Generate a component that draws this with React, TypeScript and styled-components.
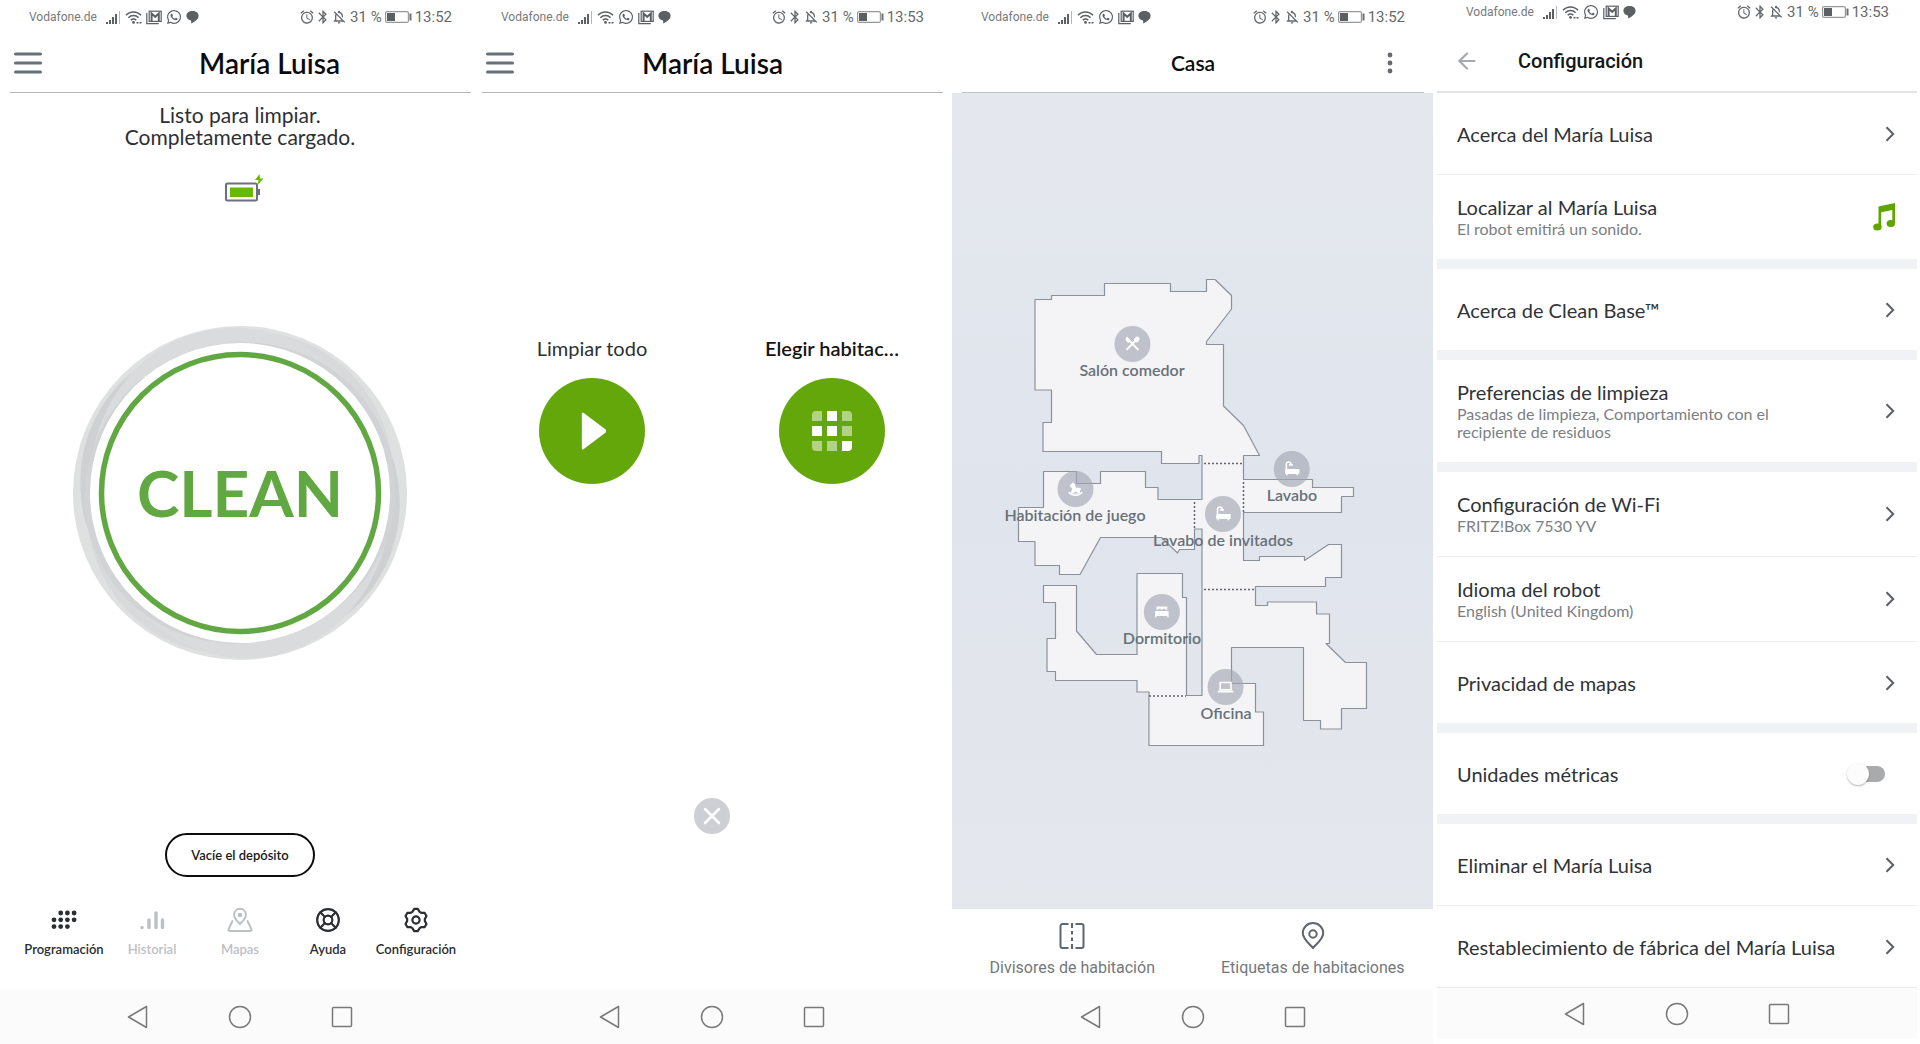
import React from 'react';
import styled, { createGlobalStyle } from 'styled-components';
import { ArrowLeft, LifeBuoy } from 'lucide-react';
import { MdAlarm, MdBluetooth, MdOutlineNotificationsOff } from 'react-icons/md';
import { FaWhatsapp } from 'react-icons/fa';

const rounded = 'Lato, "Open Sans", sans-serif';
const system = 'Roboto, "Liberation Sans", sans-serif';

const GlobalStyle = createGlobalStyle`
  *, *::before, *::after { box-sizing: border-box; }
  body { margin: 0; background: #fff; font-family: ${rounded}; color: #2d3035; }
  button { margin: 0; padding: 0; border: 0; background: none; font: inherit; color: inherit; cursor: pointer; }
  h1, p, ul { margin: 0; padding: 0; }
  svg { display: block; flex: none; }
`;

const Gallery = styled.main`
  display: grid;
  grid-template-columns: 472fr 480fr 481fr 487fr;
  min-height: 100vh;
  overflow: hidden;
`;

const Screen = styled.section<{ $bleed?: boolean; $inset?: boolean }>`
  display: flex;
  flex-direction: column;
  min-width: 0;
  background: #fff;
  margin: ${(p) => (p.$inset ? '0 3px 5px 4px' : p.$bleed ? '0 -8px 0 0' : '0')};
`;

/* Status bar */

const StatusRow = styled.div<{ $compact?: boolean }>`
  display: flex;
  align-items: center;
  justify-content: space-between;
  height: ${(p) => (p.$compact ? 24 : 34)}px;
  padding: 0 28px 0 29px;
  font-family: ${system};
  color: #66696c;
`;

const StatusGroup = styled.div<{ $gap: number }>`
  display: flex;
  align-items: center;
  gap: ${(p) => p.$gap}px;
`;

const Carrier = styled.span`
  font-size: 12px;
  margin-right: 5px;
  color: #77797c;
`;

const StatusText = styled.span`
  font-size: 15px;
  white-space: nowrap;
`;

const SignalIcon = () => (
  <svg width="15" height="15" viewBox="0 0 15 15" fill="#5d6063">
    <rect x="0" y="12" width="2" height="2" />
    <rect x="3" y="10" width="2" height="4" />
    <rect x="6" y="7" width="2" height="7" />
    <rect x="9" y="4" width="2" height="10" />
    <rect x="13" y="1" width="1" height="13" fill="#b5b7b9" />
  </svg>
);

const WifiIcon = () => (
  <svg width="17" height="15" viewBox="0 0 17 15" fill="none" stroke="#5d6063" strokeWidth="1.5">
    <path d="M1 5.2C5 .8 12 .8 16 5.2M3.4 7.8c2.8-3 7.4-3 10.2 0M5.7 10.2c1.6-1.6 4-1.6 5.6 0" />
    <circle cx="8.5" cy="12.4" r="1.4" fill="#5d6063" stroke="none" />
    <path d="M11.5 12.8h2M14.5 12.8h2" />
  </svg>
);

const MailIcon = () => (
  <svg width="16" height="15" viewBox="0 0 16 15" fill="none" stroke="#5d6063">
    <path d="M.8 3v10.7h12" strokeWidth="1.2" />
    <rect x="3.2" y="1.2" width="12" height="10.2" strokeWidth="1.2" />
    <path d="M5.6 11V3.6l3.6 3.2 3.6-3.2V11" strokeWidth="2" />
  </svg>
);

const BubbleIcon = () => (
  <svg width="13" height="14" viewBox="0 0 13 14" fill="#5d6063">
    <path d="M6.5 1C3 1 .4 3 .4 5.8c0 2.6 2.1 4.3 4.6 4.7l.3 3.1c2.500-1.400 7.300-3.900 7.300-7.800C12.600 3 10 1 6.500 1z" />
  </svg>
);

const BatteryIcon = () => (
  <svg width="27" height="14" viewBox="0 0 27 14" fill="none" stroke="#96989a">
    <rect x=".6" y="1.6" width="22.8" height="10.8" rx="1.5" strokeWidth="1.2" />
    <rect x="2" y="3" width="8" height="8" fill="#5d6063" stroke="none" />
    <path d="M25.5 3.5v7" strokeWidth="2" stroke="#6c6f72" />
  </svg>
);

function StatusBar({ time, mailFirst, compact }: { time: string; mailFirst?: boolean; compact?: boolean }) {
  return (
    <StatusRow $compact={compact}>
      <StatusGroup $gap={4}>
        <Carrier>Vodafone.de</Carrier>
        <SignalIcon />
        <WifiIcon />
        {mailFirst && <MailIcon />}
        <FaWhatsapp size={16} color="#5d6063" />
        {!mailFirst && <MailIcon />}
        <BubbleIcon />
      </StatusGroup>
      <StatusGroup $gap={3}>
        <StatusGroup $gap={0}>
          <MdAlarm size={16} />
          <MdBluetooth size={16} />
          <MdOutlineNotificationsOff size={16} />
        </StatusGroup>
        <StatusText>31 %</StatusText>
        <BatteryIcon />
        <StatusText>{time}</StatusText>
      </StatusGroup>
    </StatusRow>
  );
}

/* Header */

const Header = styled.header<{ $tint?: boolean }>`
  display: grid;
  grid-template-columns: 48px 1fr 48px;
  align-items: center;
  height: 59px;
  margin: 0 9px 0 10px;
  border-bottom: 1px solid ${(p) => (p.$tint ? '#bcc2ce' : '#b4b6b9')};
`;

const Title = styled.h1<{ $small?: boolean; $shifted?: boolean }>`
  grid-column: 2;
  font-size: ${(p) => (p.$small ? 21 : 28)}px;
  font-weight: 600;
  line-height: 32px;
  text-align: center;
  color: #0b0b0c;
  padding: ${(p) => (p.$shifted ? '0 0 0 58px' : '0')};
`;

const IconButton = styled.button`
  display: flex;
  align-items: center;
  justify-content: center;
  height: 32px;
`;

const MenuButton = styled(IconButton)`
  width: 36px;
`;

const MoreButton = styled(IconButton)`
  width: 28px;
`;

const HamburgerIcon = () => (
  <svg width="28" height="22" viewBox="0 0 28 22" stroke="#67717c" strokeWidth="3" strokeLinecap="round">
    <path d="M1.5 2h25M1.5 11h25M1.5 20h25" />
  </svg>
);

const KebabIcon = () => (
  <svg width="6" height="22" viewBox="0 0 6 22" fill="#66696c">
    <circle cx="3" cy="3" r="2.4" />
    <circle cx="3" cy="11" r="2.4" />
    <circle cx="3" cy="19" r="2.4" />
  </svg>
);

/* Android navigation */

const NavRow = styled.nav<{ $flat?: boolean }>`
  display: flex;
  align-items: center;
  justify-content: center;
  gap: 80px;
  height: ${(p) => (p.$flat ? 51 : 54)}px;
  background: #fbfbfb;
`;

const NavButton = styled(IconButton)`
  width: 22px;
`;

function SystemNav({ flat }: { flat?: boolean }) {
  const line = { fill: 'none', stroke: '#77797b', strokeWidth: 1.5, strokeLinejoin: 'round' as const };
  return (
    <NavRow $flat={flat} aria-label="Sistema">
      <NavButton aria-label="Atrás">
        <svg width="22" height="24" viewBox="0 0 22 24" {...line}><path d="M19.5 1.5v21L1.5 12z" /></svg>
      </NavButton>
      <NavButton aria-label="Inicio">
        <svg width="24" height="24" viewBox="0 0 24 24" {...line}><circle cx="12" cy="12" r="10.5" /></svg>
      </NavButton>
      <NavButton aria-label="Recientes">
        <svg width="22" height="24" viewBox="0 0 22 24" {...line}><rect x="1.5" y="2.5" width="19" height="19" rx="1" /></svg>
      </NavButton>
    </NavRow>
  );
}

/* Home screen */

const HomeBody = styled.div`
  flex: 1;
  display: flex;
  flex-direction: column;
  align-items: center;
  justify-content: space-between;
  padding: 11px 20px 33px;
`;

const HomeTop = styled.div`
  display: flex;
  flex-direction: column;
  align-items: center;
  gap: 26px;
`;

const RobotStatus = styled.p`
  font-size: 21px;
  line-height: 22px;
  text-align: center;
`;

const CleanButton = styled.button`
  display: grid;
  place-items: center;
  margin-bottom: 50px;
  border-radius: 50%;

  & > * { grid-area: 1 / 1; }
`;

const CleanLabel = styled.span`
  font-size: 64px;
  font-weight: 700;
  line-height: 64px;
  color: #61a843;
`;

const HomeBottom = styled.div`
  display: flex;
  flex-direction: column;
  align-items: center;
  align-self: stretch;
  gap: 30px;
`;

const PillButton = styled.button`
  height: 44px;
  width: 150px;
  border: 2px solid #0c0c0c;
  border-radius: 22px;
  font-size: 13px;
  font-weight: 600;
  color: #17181a;
`;

const Tabs = styled.nav`
  display: grid;
  grid-template-columns: repeat(5, 1fr);
  align-self: stretch;
`;

const Tab = styled.button`
  display: flex;
  flex-direction: column;
  align-items: center;
  gap: 8px;
  font-size: 13px;
  font-weight: 600;
  line-height: 16px;
  color: #2a2d31;

  &:disabled { color: #bcc0c4; }
`;

const ChargeIcon = () => (
  <svg width="48" height="28" viewBox="-8 0 48 28">
    <rect x="2" y="9.5" width="31" height="17" rx="1.5" fill="#fff" stroke="#69707f" strokeWidth="2" />
    <rect x="6" y="13.5" width="23" height="9.5" fill="#69b800" />
    <rect x="34" y="15" width="2" height="6" fill="#69707f" />
    <path d="M35.500 0 31 6h3.500l-1 5L39.500 4.500H36z" fill="#69b800" />
  </svg>
);

const RingArt = () => (
  <svg width="334" height="334" viewBox="-167 -167 334 334">
    <circle r="167" fill="#dfe1e1" />
    <ellipse rx="164" ry="151" transform="rotate(-62)" fill="#d8d9da" />
    <ellipse rx="163" ry="151" transform="rotate(32)" fill="#cfd0d2" />
    <ellipse rx="166" ry="150" transform="rotate(78)" fill="#dadbdc" />
    <ellipse rx="156" ry="150" transform="rotate(-20)" fill="#d2d3d5" />
    <circle r="150" fill="#fff" />
    <circle r="138.500" fill="none" stroke="#61a843" strokeWidth="5.500" />
  </svg>
);

const scheduleDots = [[1, 0], [2, 0], [3, 0], [0, 1], [1, 1], [2, 1], [3, 1], [0, 2], [1, 2], [2, 2]];

const ScheduleIcon = () => (
  <svg width="26" height="26" viewBox="0 0 26 26" fill="currentColor">
    {scheduleDots.map(([x, y]) => (
      <circle key={`${x}-${y}`} cx={3 + x * 6.7} cy={6 + y * 6.8} r="2.4" />
    ))}
  </svg>
);

const HistoryIcon = () => (
  <svg width="26" height="26" viewBox="0 0 26 26" stroke="currentColor" strokeWidth="3.4" strokeLinecap="round">
    <path d="M3 20.500v.1M10 13v7.500M17 6v14.500M23.500 13v7.500" />
  </svg>
);

const MapsIcon = () => (
  <svg width="26" height="26" viewBox="0 0 26 26" fill="none" stroke="currentColor" strokeWidth="1.9" strokeLinejoin="round" strokeLinecap="round">
    <path d="M13 17c-3-3-6-5.500-6-9.200a6 6 0 0 1 12 0C19 11.500 16 14 13 17z" />
    <circle cx="13" cy="8" r="1.3" fill="currentColor" />
    <path d="M5.500 14 1.500 22.500c-.3.800.2 1.500 1 1.500h21c.8 0 1.300-.7 1-1.500L20.500 14" />
  </svg>
);

const gearPoints = Array.from({ length: 6 }, (_, k) =>
  [[-24, 8.9], [-9, 11.2], [9, 11.2], [24, 8.9]].map(([offset, radius]) => {
    const angle = ((k * 60 - 90 + offset) * Math.PI) / 180;
    return `${(13 + radius * Math.cos(angle)).toFixed(2)},${(13 + radius * Math.sin(angle)).toFixed(2)}`;
  }).join(' ')
).join(' ');

const GearIcon = () => (
  <svg width="26" height="26" viewBox="0 0 26 26" fill="none" stroke="currentColor" strokeWidth="2.2" strokeLinejoin="round">
    <polygon points={gearPoints} />
    <circle cx="13" cy="13" r="3.6" />
  </svg>
);

/* Room chooser */

const ChooserBody = styled.div`
  flex: 1;
  display: flex;
  flex-direction: column;
  align-items: center;
  justify-content: space-between;
  padding: 243px 0 156px;
`;

const Choices = styled.div`
  display: grid;
  grid-template-columns: 1fr 1fr;
  align-self: stretch;
`;

const Choice = styled.button<{ $strong?: boolean }>`
  display: flex;
  flex-direction: column;
  align-items: center;
  gap: 18px;
  font-size: 20px;
  font-weight: ${(p) => (p.$strong ? 600 : 400)};
  line-height: 24px;
  color: ${(p) => (p.$strong ? '#141517' : '#2d3035')};
`;

const Disc = styled.span`
  display: flex;
  align-items: center;
  justify-content: center;
  width: 106px;
  height: 106px;
  border-radius: 50%;
  background: #64a70b;
`;

const CloseButton = styled(IconButton)`
  width: 36px;
  height: 36px;
  border-radius: 50%;
  background: #cdcfd4;
`;

const PlayIcon = () => (
  <svg width="28" height="38" viewBox="0 0 28 38" fill="#fff" stroke="#fff" strokeWidth="2" strokeLinejoin="round">
    <path d="M6 1.500v35L30 19z" transform="translate(-1 0) scale(.97 1)" />
  </svg>
);

const roomCells = [0, 1, 0, 1, 1, 0, 0, 0, 1];

const CellsIcon = () => (
  <svg width="40" height="40" viewBox="0 0 40 40" fill="#fff">
    <clipPath id="cells"><rect width="40" height="40" rx="4" /></clipPath>
    <g clipPath="url(#cells)">
      {roomCells.map((on, i) => (
        <rect key={i} x={(i % 3) * 15} y={Math.floor(i / 3) * 15} width="10" height="10" opacity={on ? 1 : 0.5} />
      ))}
    </g>
  </svg>
);

/* Map screen */

const MapArea = styled.div`
  flex: 1;
  display: flex;
  align-items: center;
  justify-content: center;
  background: linear-gradient(180deg, #e4e8ee 0%, #e0e4ec 50%, #e4e7ec 100%);
`;

const Plan = styled.div`
  position: relative;
  width: 100%;
  aspect-ratio: 481 / 815;

  & > svg { width: 100%; height: 100%; }
`;

const Pin = styled.div<{ $x: number; $y: number }>`
  position: absolute;
  left: ${(p) => (p.$x / 481) * 100}%;
  top: ${(p) => (p.$y / 815) * 100}%;
  transform: translate(-50%, -18px);
  display: flex;
  flex-direction: column;
  align-items: center;
  font-size: 16px;
  font-weight: 600;
  line-height: 15px;
  white-space: nowrap;
  color: #687079;
`;

const PinDisc = styled.span`
  display: flex;
  align-items: center;
  justify-content: center;
  width: 36px;
  height: 36px;
  border-radius: 50%;
  background: rgba(163, 168, 180, 0.65);
`;

const outline =
  'M83 205.500H99.500V201.500H152.500V189.500H218.500V197.500H254.500V185.500H263L279.500 201.500V215L254.500 247.500V250.500H271.500V312L291.500 331.500L307.500 361.500H291.500V385.500H360.500V393.500H401.500V402.500H389.500V418.500H291.500V466.500H307.500V462.500H352.500V466.500L376.500 450.500H389.500V483.500H373.500V492.500H303.500V511.500H315.500V508H364.500V520H377.500V549.500H374L393.500 568.500H414.500V614.500H389.500V635H368.500V626.500H351.500V553.500H279.500V589.500H303.500V618H311.500V651.500H197V598H185V586.500H103.500V577.500H95V544.500H103.500V508.500H91.500V491.500H124.500V537L144.500 560.500H185V479.500H230.500V503.500H234.500V601.500H250V435H242.500V455.500H227.500L225.500 459L209.500 443.500H148.500L128 480.500H107.500V471.500H83V447.500H66.500V413.500H91.500V377.500H124.500V389.500H148.500V377.500H193.500V393.500H206V405.500H250V361.500H247V369.500H209.500V357.500H91V328.500H99.500V296H83Z';

const dividers = 'M252 369.500H291M291.500 388V418M242.500 408V434M252 495.500H303M197 602H234';

const glyphs: Record<string, React.ReactNode> = {
  dining: (
    <g>
      <path d="M4 3.500 16 16M16 3.500 4 16" stroke="#fff" strokeWidth="2.200" strokeLinecap="round" />
      <ellipse cx="14.8" cy="5" rx="2.6" ry="3.4" transform="rotate(45 14.8 5)" />
      <path d="M2.500 3.500 4 2l4 4-2 2.500c-2 0-3.500-2-3.500-5z" />
    </g>
  ),
  horse: (
    <g>
      <path d="M3.500 6.500 7 2.500 8.500 4c1.200 1 1.200 3 2 4.500h3.500c1.500 0 2.200 1 2.500 2.500l-1.500-.5v4.500H5c0-2.500 1.200-4 1.500-6.500L5 8.500z" />
      <path d="M3 14c3 4 11 4 14 0" stroke="#fff" strokeWidth="1.800" fill="none" strokeLinecap="round" />
      <path d="M8 14.500c1-2 3.500-2 4.500 0z" fill="#bfc3cb" />
    </g>
  ),
  bath: (
    <g>
      <path d="M4 10V4.500C4 1.500 9 1.500 9 4.500" stroke="#fff" strokeWidth="1.800" fill="none" />
      <path d="M6.800 4.500h4.400v1.800H6.800zM2.500 10h16v5.500h-1.500V17h-1.800v-1.500H5.500V17H3.700v-1.500H2.500z" />
    </g>
  ),
  bed: (
    <g>
      <path d="M4 4h12v3.500h-1.500l-1-1h-2l-1 1h-1l-1-1h-2l-1 1H4z" />
      <path d="M2.500 9h15v7h-1.500v-1.500H4V16H2.500z" />
    </g>
  ),
  laptop: (
    <g>
      <path d="M4 5h12v8H4z" stroke="#fff" strokeWidth="1.800" fill="none" />
      <path d="M2 14h16l.8 2H1.200z" />
    </g>
  ),
};

const rooms = [
  { name: 'Salón comedor', glyph: 'dining', x: 180, y: 250 },
  { name: 'Habitación de juego', glyph: 'horse', x: 123, y: 395 },
  { name: 'Lavabo', glyph: 'bath', x: 340, y: 375 },
  { name: 'Lavabo de invitados', glyph: 'bath', x: 271, y: 420 },
  { name: 'Dormitorio', glyph: 'bed', x: 210, y: 518 },
  { name: 'Oficina', glyph: 'laptop', x: 274, y: 593 },
];

const MapActions = styled.div`
  display: grid;
  grid-template-columns: 1fr 1fr;
  height: 81px;
`;

const MapAction = styled.button`
  display: flex;
  flex-direction: column;
  align-items: center;
  justify-content: center;
  gap: 8px;
  font-family: ${system};
  font-size: 16px;
  line-height: 20px;
  color: #74787d;
`;

const DividerIcon = () => (
  <svg width="26" height="28" viewBox="0 0 26 28" fill="none" stroke="#5f666e" strokeWidth="2">
    <path d="M9.500 2H3.500a2 2 0 0 0-2 2v20a2 2 0 0 0 2 2h6M16.500 2h6a2 2 0 0 1 2 2v20a2 2 0 0 1-2 2h-6" />
    <path d="M13 1v5M13 9v3.500M13 15.500v3.500M13 22v5" />
  </svg>
);

const PinIcon = () => (
  <svg width="24" height="28" viewBox="0 0 24 28" fill="none" stroke="#5f666e" strokeWidth="2">
    <path d="M12 26C7 20.500 1.800 16.500 1.800 11.200a10.200 10.200 0 0 1 20.400 0C22.200 16.500 17 20.500 12 26z" />
    <circle cx="12" cy="12" r="3.700" />
  </svg>
);

/* Settings screen */

const SettingsHeader = styled.header`
  display: flex;
  align-items: center;
  gap: 38px;
  height: 69px;
  padding: 6px 23px 0 17px;
  border-bottom: 2px solid #e1e3e5;
`;

const SettingsTitle = styled.h1`
  font-family: ${system};
  font-size: 20px;
  font-weight: 500;
  line-height: 24px;
  color: #151618;
`;

const Section = styled.ul`
  list-style: none;

  & + & { border-top: 10px solid #f1f2f5; }
`;

const Item = styled.li`
  & + & { border-top: 1px solid #ebedef; }
`;

const Row = styled.button<{ $single?: boolean }>`
  display: flex;
  align-items: center;
  justify-content: space-between;
  width: 100%;
  padding: ${(p) => (p.$single ? '29px 22px 28px 20px' : '20px 22px 21px 20px')};
  text-align: left;
`;

const SwitchRow = styled.label`
  display: flex;
  align-items: center;
  justify-content: space-between;
  padding: 29px 32px 28px 20px;
`;

const RowText = styled.span`
  display: flex;
  flex-direction: column;
  gap: 1px;
  max-width: 350px;
`;

const RowTitle = styled.span`
  font-size: 20px;
  line-height: 24px;
  white-space: nowrap;
  color: #303338;
`;

const RowNote = styled.span`
  font-size: 16px;
  line-height: 18px;
  color: #7b8085;
`;

const Switch = styled.input`
  appearance: none;
  display: flex;
  align-items: center;
  width: 38px;
  height: 16px;
  margin: 0;
  border-radius: 8px;
  background: linear-gradient(90deg, transparent 12px, #a9aaab 12px);

  &::before {
    content: '';
    width: 22px;
    height: 22px;
    border-radius: 50%;
    background: #fcfcfc;
    box-shadow: 0 1px 2px rgba(0, 0, 0, 0.3);
  }

  &:checked { justify-content: flex-end; }
`;

const MusicIcon = () => (
  <svg width="22" height="28" viewBox="0 0 22 28" fill="#5ea500">
    <path d="M5.500 3.500 22 0v20h-2.700V7L8.200 9.300V24H5.500z" />
    <ellipse cx="4.400" cy="24" rx="4.200" ry="3.500" />
    <ellipse cx="17.800" cy="20.500" rx="4.200" ry="3.500" />
  </svg>
);

const ChevronIcon = () => (
  <svg width="10" height="16" viewBox="0 0 10 16" fill="none" stroke="#5b6067" strokeWidth="2">
    <path d="M1.500 1.200 8.200 8l-6.700 6.800" />
  </svg>
);

interface Setting {
  title: string;
  note?: string;
  kind?: 'music' | 'switch';
}

const sections: Setting[][] = [
  [{ title: 'Acerca del María Luisa' }, { title: 'Localizar al María Luisa', note: 'El robot emitirá un sonido.', kind: 'music' }],
  [{ title: 'Acerca de Clean Base™' }],
  [{ title: 'Preferencias de limpieza', note: 'Pasadas de limpieza, Comportamiento con el recipiente de residuos' }],
  [
    { title: 'Configuración de Wi-Fi', note: 'FRITZ!Box 7530 YV' },
    { title: 'Idioma del robot', note: 'English (United Kingdom)' },
    { title: 'Privacidad de mapas' },
  ],
  [{ title: 'Unidades métricas', kind: 'switch' }],
  [{ title: 'Eliminar el María Luisa' }, { title: 'Restablecimiento de fábrica del María Luisa' }],
];

const SettingsBody = styled.div`
  flex: 1;
  border-bottom: 1px solid #e9ebed;
`;

function SettingRow({ title, note, kind }: Setting) {
  if (kind === 'switch') {
    return (
      <SwitchRow>
        <RowTitle>{title}</RowTitle>
        <Switch type="checkbox" role="switch" />
      </SwitchRow>
    );
  }
  return (
    <Row $single={!note}>
      <RowText>
        <RowTitle>{title}</RowTitle>
        {note && <RowNote>{note}</RowNote>}
      </RowText>
      {kind === 'music' ? <MusicIcon /> : <ChevronIcon />}
    </Row>
  );
}

export default function App() {
  return (
    <>
      <GlobalStyle />
      <Gallery>
        <Screen $bleed>
          <StatusBar time="13:52" mailFirst />
          <Header>
            <MenuButton aria-label="Menú"><HamburgerIcon /></MenuButton>
            <Title $shifted>María Luisa</Title>
          </Header>
          <HomeBody>
            <HomeTop>
              <RobotStatus>Listo para limpiar.<br />Completamente cargado.</RobotStatus>
              <ChargeIcon />
            </HomeTop>
            <CleanButton>
              <RingArt />
              <CleanLabel>CLEAN</CleanLabel>
            </CleanButton>
            <HomeBottom>
              <PillButton>Vacíe el depósito</PillButton>
              <Tabs aria-label="Principal">
                <Tab><ScheduleIcon />Programación</Tab>
                <Tab disabled><HistoryIcon />Historial</Tab>
                <Tab disabled><MapsIcon />Mapas</Tab>
                <Tab><LifeBuoy size={26} strokeWidth={2} />Ayuda</Tab>
                <Tab><GearIcon />Configuración</Tab>
              </Tabs>
            </HomeBottom>
          </HomeBody>
          <SystemNav />
        </Screen>

        <Screen>
          <StatusBar time="13:53" />
          <Header>
            <MenuButton aria-label="Menú"><HamburgerIcon /></MenuButton>
            <Title>María Luisa</Title>
          </Header>
          <ChooserBody>
            <Choices>
              <Choice>
                Limpiar todo
                <Disc><PlayIcon /></Disc>
              </Choice>
              <Choice $strong>
                Elegir habitac…
                <Disc><CellsIcon /></Disc>
              </Choice>
            </Choices>
            <CloseButton aria-label="Cerrar">
              <svg width="18" height="18" viewBox="0 0 18 18" stroke="#fff" strokeWidth="2.5" strokeLinecap="round">
                <path d="M2 2l14 14M16 2 2 16" />
              </svg>
            </CloseButton>
          </ChooserBody>
          <SystemNav />
        </Screen>

        <Screen>
          <StatusBar time="13:52" />
          <Header $tint>
            <Title $small>Casa</Title>
            <MoreButton aria-label="Más opciones"><KebabIcon /></MoreButton>
          </Header>
          <MapArea>
            <Plan>
              <svg viewBox="0 0 481 815" fill="none">
                <path d={outline} fill="#f4f4f7" stroke="#8b919b" strokeWidth="1.2" strokeLinejoin="round" />
                <path d={dividers} stroke="#5e636d" strokeWidth="1.5" strokeDasharray="2 2" />
              </svg>
              {rooms.map((room) => (
                <Pin key={room.name} $x={room.x} $y={room.y}>
                  <PinDisc>
                    <svg width="18" height="18" viewBox="0 0 20 20" fill="#fff">{glyphs[room.glyph]}</svg>
                  </PinDisc>
                  {room.name}
                </Pin>
              ))}
            </Plan>
          </MapArea>
          <MapActions>
            <MapAction><DividerIcon />Divisores de habitación</MapAction>
            <MapAction><PinIcon />Etiquetas de habitaciones</MapAction>
          </MapActions>
          <SystemNav />
        </Screen>

        <Screen $inset>
          <StatusBar time="13:53" compact />
          <SettingsHeader>
            <IconButton aria-label="Volver"><ArrowLeft size={26} color="#a7a9ab" strokeWidth={2} /></IconButton>
            <SettingsTitle>Configuración</SettingsTitle>
          </SettingsHeader>
          <SettingsBody>
            {sections.map((items) => (
              <Section key={items[0].title}>
                {items.map((item) => (
                  <Item key={item.title}><SettingRow {...item} /></Item>
                ))}
              </Section>
            ))}
          </SettingsBody>
          <SystemNav flat />
        </Screen>
      </Gallery>
    </>
  );
}
